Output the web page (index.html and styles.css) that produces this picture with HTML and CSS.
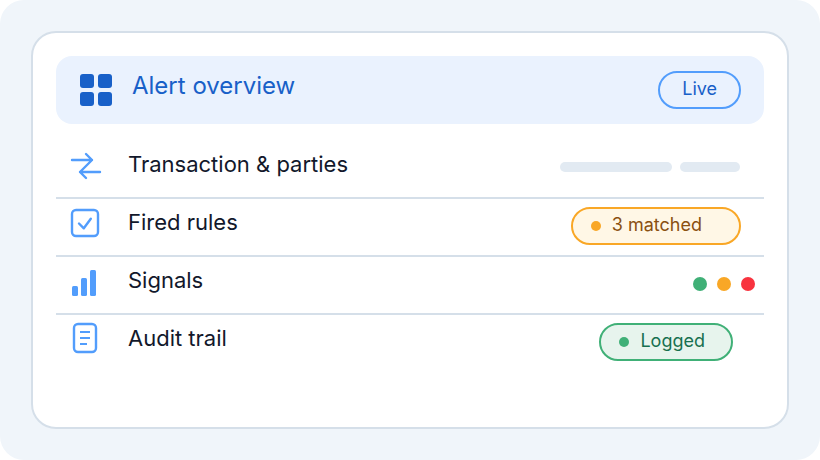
FILE: index.html
```html
<!DOCTYPE html>
<html lang="en">
<head>
    <meta charset="UTF-8">
    <meta name="viewport" content="width=device-width, initial-scale=1.0">
    <title>Alert overview</title>
    <link rel="stylesheet" href="styles.css">
</head>
<body>
    <main class="page">
        <section class="card">
            <!-- Header -->
            <header class="card-header">
                <svg class="header-icon" viewBox="0 0 32 32" aria-hidden="true">
                    <rect width="14" height="14" rx="3"/>
                    <rect x="18" width="14" height="14" rx="3"/>
                    <rect y="18" width="14" height="14" rx="3"/>
                    <rect x="18" y="18" width="14" height="14" rx="3"/>
                </svg>
                <h1 class="title">Alert overview</h1>
                <span class="badge badge-live">Live</span>
            </header>

            <!-- Sections -->
            <ul class="rows">
                <li class="row">
                    <svg class="row-icon" viewBox="0 0 36 36" aria-hidden="true">
                        <path d="M4 12H24M18 6l6 6L12 24l6 6M12 24H32"/>
                    </svg>
                    <span class="label">Transaction &amp; parties</span>
                    <span class="placeholders">
                        <span class="bar bar-long"></span>
                        <span class="bar bar-short"></span>
                    </span>
                </li>
                <li class="row">
                    <svg class="row-icon" viewBox="0 0 36 36" aria-hidden="true">
                        <rect x="4" y="4" width="26" height="26" rx="4"/>
                        <path d="M11 17.5l4.8 4.8 7-9.5"/>
                    </svg>
                    <span class="label">Fired rules</span>
                    <span class="badge badge-matched"><i class="dot"></i>3 matched</span>
                </li>
                <li class="row">
                    <svg class="row-icon filled" viewBox="0 0 36 36" aria-hidden="true">
                        <rect x="4" y="22" width="6" height="10" rx="1.5"/>
                        <rect x="13" y="14" width="6" height="18" rx="1.5"/>
                        <rect x="22" y="6" width="6" height="26" rx="1.5"/>
                    </svg>
                    <span class="label">Signals</span>
                    <span class="signals">
                        <i class="signal green"></i>
                        <i class="signal amber"></i>
                        <i class="signal red"></i>
                    </span>
                </li>
                <li class="row">
                    <svg class="row-icon" viewBox="0 0 36 36" aria-hidden="true">
                        <rect x="6" y="2" width="22" height="28" rx="4"/>
                        <path class="thin" d="M12 10h10M12 16h10M12 22h7"/>
                    </svg>
                    <span class="label">Audit trail</span>
                    <span class="badge badge-logged"><i class="dot"></i>Logged</span>
                </li>
            </ul>
        </section>
    </main>
</body>
</html>
```
FILE: styles.css
```css
:root {
    --blue: #1860c8;
    --sky: #529dfc;
    --green: #40b077;
    --amber: #f9a726;
    --red: #f8333f;
    --line: #d5dfe9;
}

* {
    box-sizing: border-box;
}

body {
    margin: 0;
    background: #fff;
    color: #12182b;
    font-family: Inter, "Liberation Sans", sans-serif;
}

.page {
    display: flex;
    min-height: 100vh;
    padding: 31px;
    background: #f0f5fa;
    border-radius: 24px;
}

.card {
    flex: 1;
    padding: 23px;
    background: #fff;
    border: 2px solid var(--line);
    border-radius: 25px;
}

/* Header */
.card-header {
    display: flex;
    align-items: center;
    gap: 20px;
    height: 68px;
    padding: 0 23px 0 24px;
    background: #eaf2fe;
    border-radius: 16px;
}

.header-icon {
    width: 32px;
    height: 32px;
    fill: var(--blue);
}

.title {
    flex: 1;
    margin: 0;
    padding-bottom: 8px;
    color: var(--blue);
    font-size: 24px;
    line-height: 28px;
    font-weight: 400;
}

/* Rows */
.rows {
    margin: 17px 0 0;
    padding: 0;
    list-style: none;
}

.row {
    display: flex;
    align-items: center;
    height: 58px;
    padding: 0 23px 2px 12px;
    border-bottom: 2px solid var(--line);
}

.row:last-child {
    border-bottom-color: transparent;
}

.row-icon {
    width: 36px;
    height: 36px;
    margin: 0 24px 4px 0;
    fill: none;
    stroke: var(--sky);
    stroke-width: 2.4;
    stroke-linecap: round;
    stroke-linejoin: round;
}

.row-icon.filled {
    fill: var(--sky);
    stroke: none;
}

.thin {
    stroke-width: 2;
    stroke-linecap: butt;
}

.label {
    flex: 1;
    padding-bottom: 8px;
    font-size: 22px;
    line-height: 28px;
}

/* Badges */
.badge {
    display: flex;
    align-items: center;
    height: 38px;
    padding-bottom: 2px;
    border: 2px solid;
    border-radius: 19px;
    font-size: 18px;
    line-height: 32px;
}

.badge-live {
    padding-left: 22px;
    padding-right: 22px;
    border-color: var(--sky);
    color: var(--blue);
}

.badge-matched,
.badge-logged {
    padding-left: 18px;
}

.badge-matched {
    padding-right: 37px;
    background: #fff7e6;
    border-color: var(--amber);
    color: #8a5010;
}

.badge-logged {
    margin-right: 8px;
    padding-right: 26px;
    background: #e7f4ed;
    border-color: var(--green);
    color: #17704f;
}

.dot {
    width: 10px;
    height: 10px;
    margin: 2px 11px 0 0;
    border-radius: 50%;
    background: var(--amber);
}

.badge-logged .dot {
    background: var(--green);
}

/* Placeholder bars */
.placeholders {
    display: flex;
    gap: 8px;
    margin: 0 1px 2px 0;
}

.bar {
    height: 10px;
    border-radius: 5px;
    background: #e2eaf2;
}

.bar-long {
    width: 112px;
}

.bar-short {
    width: 60px;
}

/* Signal lights */
.signals {
    display: flex;
    gap: 10px;
    margin-right: -14px;
}

.signal {
    width: 14px;
    height: 14px;
    border-radius: 50%;
}

.green {
    background: var(--green);
}

.amber {
    background: var(--amber);
}

.red {
    background: var(--red);
}
```
